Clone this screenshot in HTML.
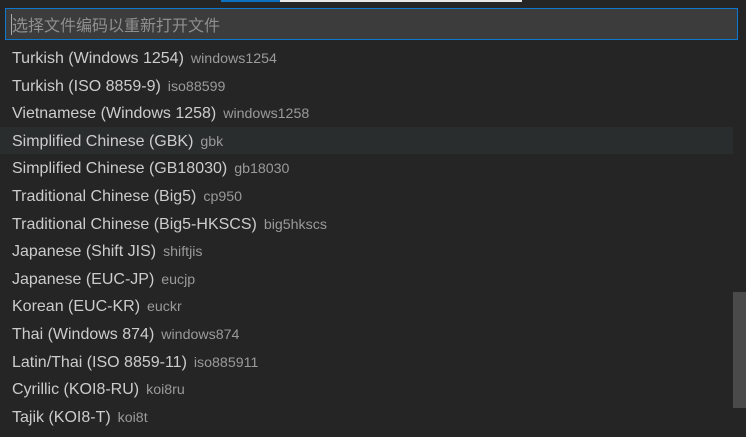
<!DOCTYPE html>
<html><head><style>
body{margin:0;width:746px;height:437px;background:#252526;overflow:hidden;position:relative;font-family:"Liberation Sans","Noto Sans CJK SC",sans-serif;}
.top1{position:absolute;left:221px;top:0;width:59px;height:2px;background:#0e70c0}
.top2{position:absolute;left:280px;top:0;width:242px;height:2px;background:#e8e8e8}
.inp{position:absolute;left:5px;top:8px;width:733px;height:32px;background:#3c3c3c;border:1px solid #0e78d0;box-sizing:border-box;}
.inp span{position:absolute;left:6px;top:5px;font-size:16px;color:#8f8f8f;font-family:"Noto Sans CJK SC",sans-serif;line-height:20px}
.inp i{position:absolute;left:5px;top:5px;width:1px;height:21px;background:#aaa}
.row{position:absolute;left:0;width:733px;height:27.6px;line-height:29px;padding-left:12px;font-size:16px;color:#cccccc;white-space:nowrap;box-sizing:border-box;}
.row b{font-weight:normal;color:#9a9a9a;font-size:14.2px;margin-left:7px}
.hl{background:#2a2d2e}
.sb{position:absolute;left:733px;top:292px;width:13px;height:116px;background:#4a4a4a}
</style></head><body>
<div class="top1"></div><div class="top2"></div>
<div class="inp"><i></i><span>选择文件编码以重新打开文件</span></div>
<div class="row" style="top:44px">Turkish (Windows 1254)<b>windows1254</b></div>
<div class="row" style="top:71.6px">Turkish (ISO 8859-9)<b>iso88599</b></div>
<div class="row" style="top:99.2px">Vietnamese (Windows 1258)<b>windows1258</b></div>
<div class="row hl" style="top:126.8px">Simplified Chinese (GBK)<b>gbk</b></div>
<div class="row" style="top:154.4px">Simplified Chinese (GB18030)<b>gb18030</b></div>
<div class="row" style="top:182px">Traditional Chinese (Big5)<b>cp950</b></div>
<div class="row" style="top:209.6px">Traditional Chinese (Big5-HKSCS)<b>big5hkscs</b></div>
<div class="row" style="top:237.2px">Japanese (Shift JIS)<b>shiftjis</b></div>
<div class="row" style="top:264.8px">Japanese (EUC-JP)<b>eucjp</b></div>
<div class="row" style="top:292.4px">Korean (EUC-KR)<b>euckr</b></div>
<div class="row" style="top:320px">Thai (Windows 874)<b>windows874</b></div>
<div class="row" style="top:347.6px">Latin/Thai (ISO 8859-11)<b>iso885911</b></div>
<div class="row" style="top:375.2px">Cyrillic (KOI8-RU)<b>koi8ru</b></div>
<div class="row" style="top:402.8px">Tajik (KOI8-T)<b>koi8t</b></div>
<div class="sb"></div>
</body></html>
